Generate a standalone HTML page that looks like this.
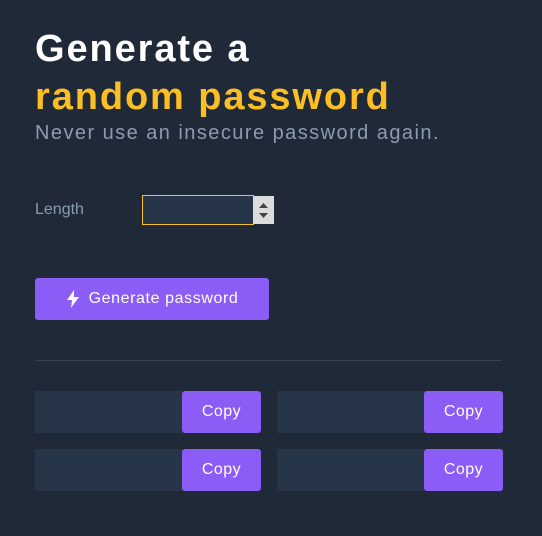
<!DOCTYPE html>
<html><head><style>
body{margin:0;width:542px;height:536px;background:#1f2937;font-family:"Liberation Sans",sans-serif;position:relative;overflow:hidden}
.a{position:absolute}
h1{position:absolute;left:35px;top:25px;margin:0;font-size:38px;line-height:48px;font-weight:bold;color:#fff;letter-spacing:1.9px}
h1 span{color:#fbbf24}
.sub{left:35px;top:122px;font-size:20px;color:#8b9cb1;letter-spacing:1.45px}
.lab{left:35px;top:201px;font-size:16px;color:#8b9cb1}
.inp{left:142px;top:195px;width:110px;height:28px;border:1px solid #fbbf24;background:#273549}
.spin{left:253px;top:196px;width:21px;height:28px;background:#dcdcdc}
.gen{left:35px;top:278px;width:234px;height:42px;background:#8b5cf6;border-radius:3px;color:#fff;font-size:16px;display:flex;align-items:center;justify-content:center;gap:9px;letter-spacing:0.6px}
.hr{left:35px;top:360px;width:467px;height:1px;background:#374151}
.f{height:42px;background:#273549}
.c{height:42px;width:79px;background:#8b5cf6;border-radius:3px;color:#fff;font-size:16px;display:flex;align-items:center;justify-content:center;letter-spacing:0.5px}
</style></head><body>
<h1>Generate a<br><span>random password</span></h1>
<div class="a sub">Never use an insecure password again.</div>
<div class="a lab">Length</div>
<div class="a inp"></div>
<div class="a spin"><svg width="21" height="28"><path d="M6 12 L10.5 7 L15 12Z M6 17 L10.5 22 L15 17Z" fill="#444"/></svg></div>
<div class="a gen"><svg width="14" height="18" viewBox="0 0 14 18"><path d="M8 0 L1 10 H6 L5 18 L13 7 H8 Z" fill="#fff"/></svg>Generate password</div>
<div class="a hr"></div>
<div class="a f" style="left:35px;top:391px;width:147px"></div><div class="a c" style="left:182px;top:391px">Copy</div>
<div class="a f" style="left:277px;top:391px;width:147px"></div><div class="a c" style="left:424px;top:391px">Copy</div>
<div class="a f" style="left:35px;top:449px;width:147px"></div><div class="a c" style="left:182px;top:449px">Copy</div>
<div class="a f" style="left:277px;top:449px;width:147px"></div><div class="a c" style="left:424px;top:449px">Copy</div>
</body></html>
